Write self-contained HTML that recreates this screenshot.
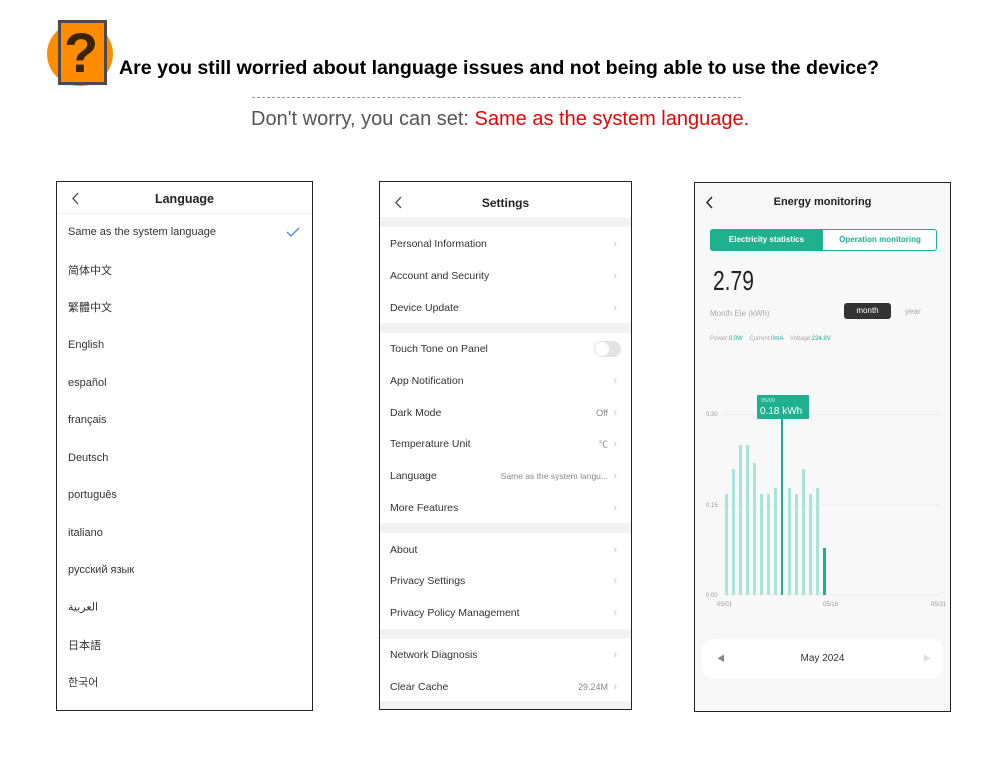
<!DOCTYPE html>
<html><head><meta charset="utf-8"><style>
*{margin:0;padding:0;box-sizing:border-box}
body{width:1000px;height:771px;background:#fff;position:relative;overflow:hidden;font-family:"Liberation Sans","Noto Sans CJK SC",sans-serif}
.a{position:absolute;white-space:nowrap}
.ph{position:absolute;border:1px solid #222;overflow:hidden}
.li{position:absolute;left:11px;font-size:11px;color:#333;transform:translateY(-50%)}
.sr{position:absolute;left:10px;font-size:10.5px;color:#333;transform:translateY(-50%)}
.chev{position:absolute;right:14px;font-size:11px;color:#c4c4c4;transform:translateY(-50%)}
.val{position:absolute;font-size:9px;color:#888;transform:translateY(-50%)}
.sep{position:absolute;left:0;right:0;background:#f2f2f4}
</style></head><body>
<!-- icon -->
<div class="a" style="left:47px;top:22px;width:66px;height:64px;border-radius:50%;background:#ff8c00"></div>
<div class="a" style="left:58px;top:20px;width:49px;height:65px;background:#4a4a50"></div>
<div class="a" style="left:61px;top:23px;width:43px;height:59px;background:#ff8c00"></div>
<div class="a" style="left:64px;top:20px;font:bold 56px/66px 'Liberation Sans',sans-serif;color:#3a2300">?</div>
<div class="a" style="left:119px;top:57px;font-size:19.6px;font-weight:bold;color:#000">Are you still worried about language issues and not being able to use the device?</div>
<div class="a" style="left:252px;top:97px;width:489px;border-top:1px dashed #999"></div>
<div class="a" style="left:251px;top:108px;font-size:20px;color:#555">Don't worry, you can set: <span style="color:#e00">Same as the system language.</span></div>

<!-- phone 1 -->
<div class="ph" style="left:56px;top:181px;width:257px;height:530px;background:#fff">
<svg class="a" style="left:15px;top:10px" width="8" height="13"><path d="M6 1 L1 6.5 L6 12" fill="none" stroke="#444" stroke-width="1.3"/></svg>
<div class="a" style="left:0;width:100%;text-align:center;top:10px;font-size:12.5px;font-weight:bold;color:#222">Language</div>
<div class="a" style="left:0;right:0;top:31px;border-top:1px solid #f2f2f2"></div>
<div class="li" style="top:50px">Same as the system language</div>
<svg class="a" style="left:229px;top:45px" width="14" height="10"><path d="M1 5 L5 9 L13 1" fill="none" stroke="#4a86f0" stroke-width="1.3"/></svg>
<div class="li" style="top:88px">简体中文</div>
<div class="li" style="top:125px">繁體中文</div>
<div class="li" style="top:163px">English</div>
<div class="li" style="top:201px">español</div>
<div class="li" style="top:238px">français</div>
<div class="li" style="top:276px">Deutsch</div>
<div class="li" style="top:313px">português</div>
<div class="li" style="top:351px">italiano</div>
<div class="li" style="top:388px">русский язык</div>
<div class="li" style="top:425px">العربية</div>
<div class="li" style="top:463px">日本語</div>
<div class="li" style="top:500px">한국어</div>
</div>

<!-- phone 2 -->
<div class="ph" style="left:379px;top:181px;width:253px;height:529px;background:#fff">
<svg class="a" style="left:15px;top:14px" width="8" height="13"><path d="M6 1 L1 6.5 L6 12" fill="none" stroke="#444" stroke-width="1.3"/></svg>
<div class="a" style="left:0;width:100%;text-align:center;top:14px;font-size:12px;font-weight:bold;color:#222">Settings</div>
<div class="sep" style="top:35px;height:10px"></div>
<div class="sep" style="top:141px;height:10px"></div>
<div class="sep" style="top:341px;height:10px"></div>
<div class="sep" style="top:447px;height:10px"></div>
<div class="sep" style="top:519px;height:12px"></div>
<div class="sr" style="top:62px">Personal Information</div><div class="chev" style="top:62px">&#8250;</div>
<div class="sr" style="top:94px">Account and Security</div><div class="chev" style="top:94px">&#8250;</div>
<div class="sr" style="top:126px">Device Update</div><div class="chev" style="top:126px">&#8250;</div>
<div class="sr" style="top:167px">Touch Tone on Panel</div>
<div class="a" style="left:214px;top:159px;width:27px;height:16px;border-radius:8px;background:#e3e3e3"><div style="position:absolute;left:1px;top:1px;width:14px;height:14px;border-radius:50%;background:#fff"></div></div>
<div class="sr" style="top:199px">App Notification</div><div class="chev" style="top:199px">&#8250;</div>
<div class="sr" style="top:231px">Dark Mode</div><div class="val" style="right:23px;top:231px">Off</div><div class="chev" style="top:231px">&#8250;</div>
<div class="sr" style="top:262px">Temperature Unit</div><div class="val" style="right:23px;top:262px">℃</div><div class="chev" style="top:262px">&#8250;</div>
<div class="sr" style="top:294px">Language</div><div class="val" style="right:23px;top:294px;font-size:8.5px">Same as the system langu...</div><div class="chev" style="top:294px">&#8250;</div>
<div class="sr" style="top:326px">More Features</div><div class="chev" style="top:326px">&#8250;</div>
<div class="sr" style="top:368px">About</div><div class="chev" style="top:368px">&#8250;</div>
<div class="sr" style="top:399px">Privacy Settings</div><div class="chev" style="top:399px">&#8250;</div>
<div class="sr" style="top:431px">Privacy Policy Management</div><div class="chev" style="top:431px">&#8250;</div>
<div class="sr" style="top:473px">Network Diagnosis</div><div class="chev" style="top:473px">&#8250;</div>
<div class="sr" style="top:505px">Clear Cache</div><div class="val" style="right:23px;top:505px">29.24M</div><div class="chev" style="top:505px">&#8250;</div>
</div>

<!-- phone 3 -->
<div class="ph" style="left:694px;top:182px;width:257px;height:530px;background:#f8f8f8">
<svg class="a" style="left:11px;top:13px" width="8" height="13"><path d="M6 1 L1 6.5 L6 12" fill="none" stroke="#222" stroke-width="1.5"/></svg>
<div class="a" style="left:0;width:100%;text-align:center;top:13px;font-size:11px;font-weight:bold;color:#222">Energy monitoring</div>
<div class="a" style="left:15px;top:46px;width:227px;height:22px;border:1px solid #1fb08e;border-radius:3px;background:#fff"></div>
<div class="a" style="left:15px;top:46px;width:113px;height:22px;background:#1fb08e;border-radius:3px 0 0 3px;color:#fff;font-size:8px;font-weight:bold;text-align:center;line-height:22px">Electricity statistics</div>
<div class="a" style="left:128px;top:46px;width:114px;height:22px;color:#1fb08e;font-size:8px;font-weight:bold;text-align:center;line-height:22px">Operation monitoring</div>
<div class="a" style="left:18px;top:82px;font-size:28px;color:#222;transform:scaleX(.75);transform-origin:left">2.79</div>
<div class="a" style="left:15px;top:126px;font-size:8px;color:#aaa">Month Ele (kWh)</div>
<div class="a" style="left:149px;top:120px;width:47px;height:16px;border-radius:3px;background:#333;color:#fff;font-size:8px;text-align:center;line-height:16px">month</div>
<div class="a" style="left:210px;top:124px;font-size:8px;color:#aaa">year</div>
<div class="a" style="left:15px;top:153px;font-size:6px;color:#aaa">Power:<span style="color:#1fb08e">0.0W</span>&nbsp;&nbsp;&nbsp; Current:<span style="color:#1fb08e">0mA</span>&nbsp;&nbsp;&nbsp; Voltage:<span style="color:#1fb08e">224.8V</span></div>
<svg class="a" style="left:0;top:200px" width="257" height="230">
<g font-family="Liberation Sans" font-size="6" fill="#999">
<text x="11" y="33">0.30</text><text x="11" y="124">0.15</text><text x="11" y="214">0.00</text>
<text x="22" y="223">05/01</text><text x="128" y="223">05/16</text><text x="236" y="223">05/31</text></g>
<line x1="28" y1="31" x2="246" y2="31" stroke="#eee"/><line x1="28" y1="122" x2="246" y2="122" stroke="#eee"/><line x1="28" y1="212" x2="246" y2="212" stroke="#eee"/>
<g fill="#a9e5d6">
<rect x="30" y="111" width="3" height="101"/><rect x="37" y="86" width="3" height="126"/><rect x="44" y="62" width="3" height="150"/><rect x="51" y="62" width="3" height="150"/><rect x="58" y="80" width="3" height="132"/><rect x="65" y="111" width="3" height="101"/><rect x="72" y="111" width="3" height="101"/><rect x="79" y="105" width="3" height="107"/><rect x="93" y="105" width="3" height="107"/><rect x="100" y="111" width="3" height="101"/><rect x="107" y="86" width="3" height="126"/><rect x="114" y="111" width="3" height="101"/><rect x="121" y="105" width="3" height="107"/></g>
<rect x="86" y="30" width="2" height="182" fill="#1fb08e"/>
<rect x="128" y="165" width="3" height="47" fill="#1fb08e"/>
<rect x="62" y="12" width="52" height="24" rx="1" fill="#1fb08e"/>
<text x="66" y="19" font-family="Liberation Sans" font-size="5.5" fill="#cdeee5">05/09</text>
<text x="65" y="31" font-family="Liberation Sans" font-size="10" fill="#fff">0.18 kWh</text>
</svg>
<div class="a" style="left:7px;top:456px;width:241px;height:40px;border-radius:12px;background:#fff"></div>
<div class="a" style="left:22px;top:470px;font-size:8px;color:#888">&#9664;</div>
<div class="a" style="left:0;width:100%;text-align:center;top:470px;font-size:10px;color:#333">May 2024</div>
<div class="a" style="left:228px;top:470px;font-size:8px;color:#ddd">&#9654;</div>
</div>
</body></html>
